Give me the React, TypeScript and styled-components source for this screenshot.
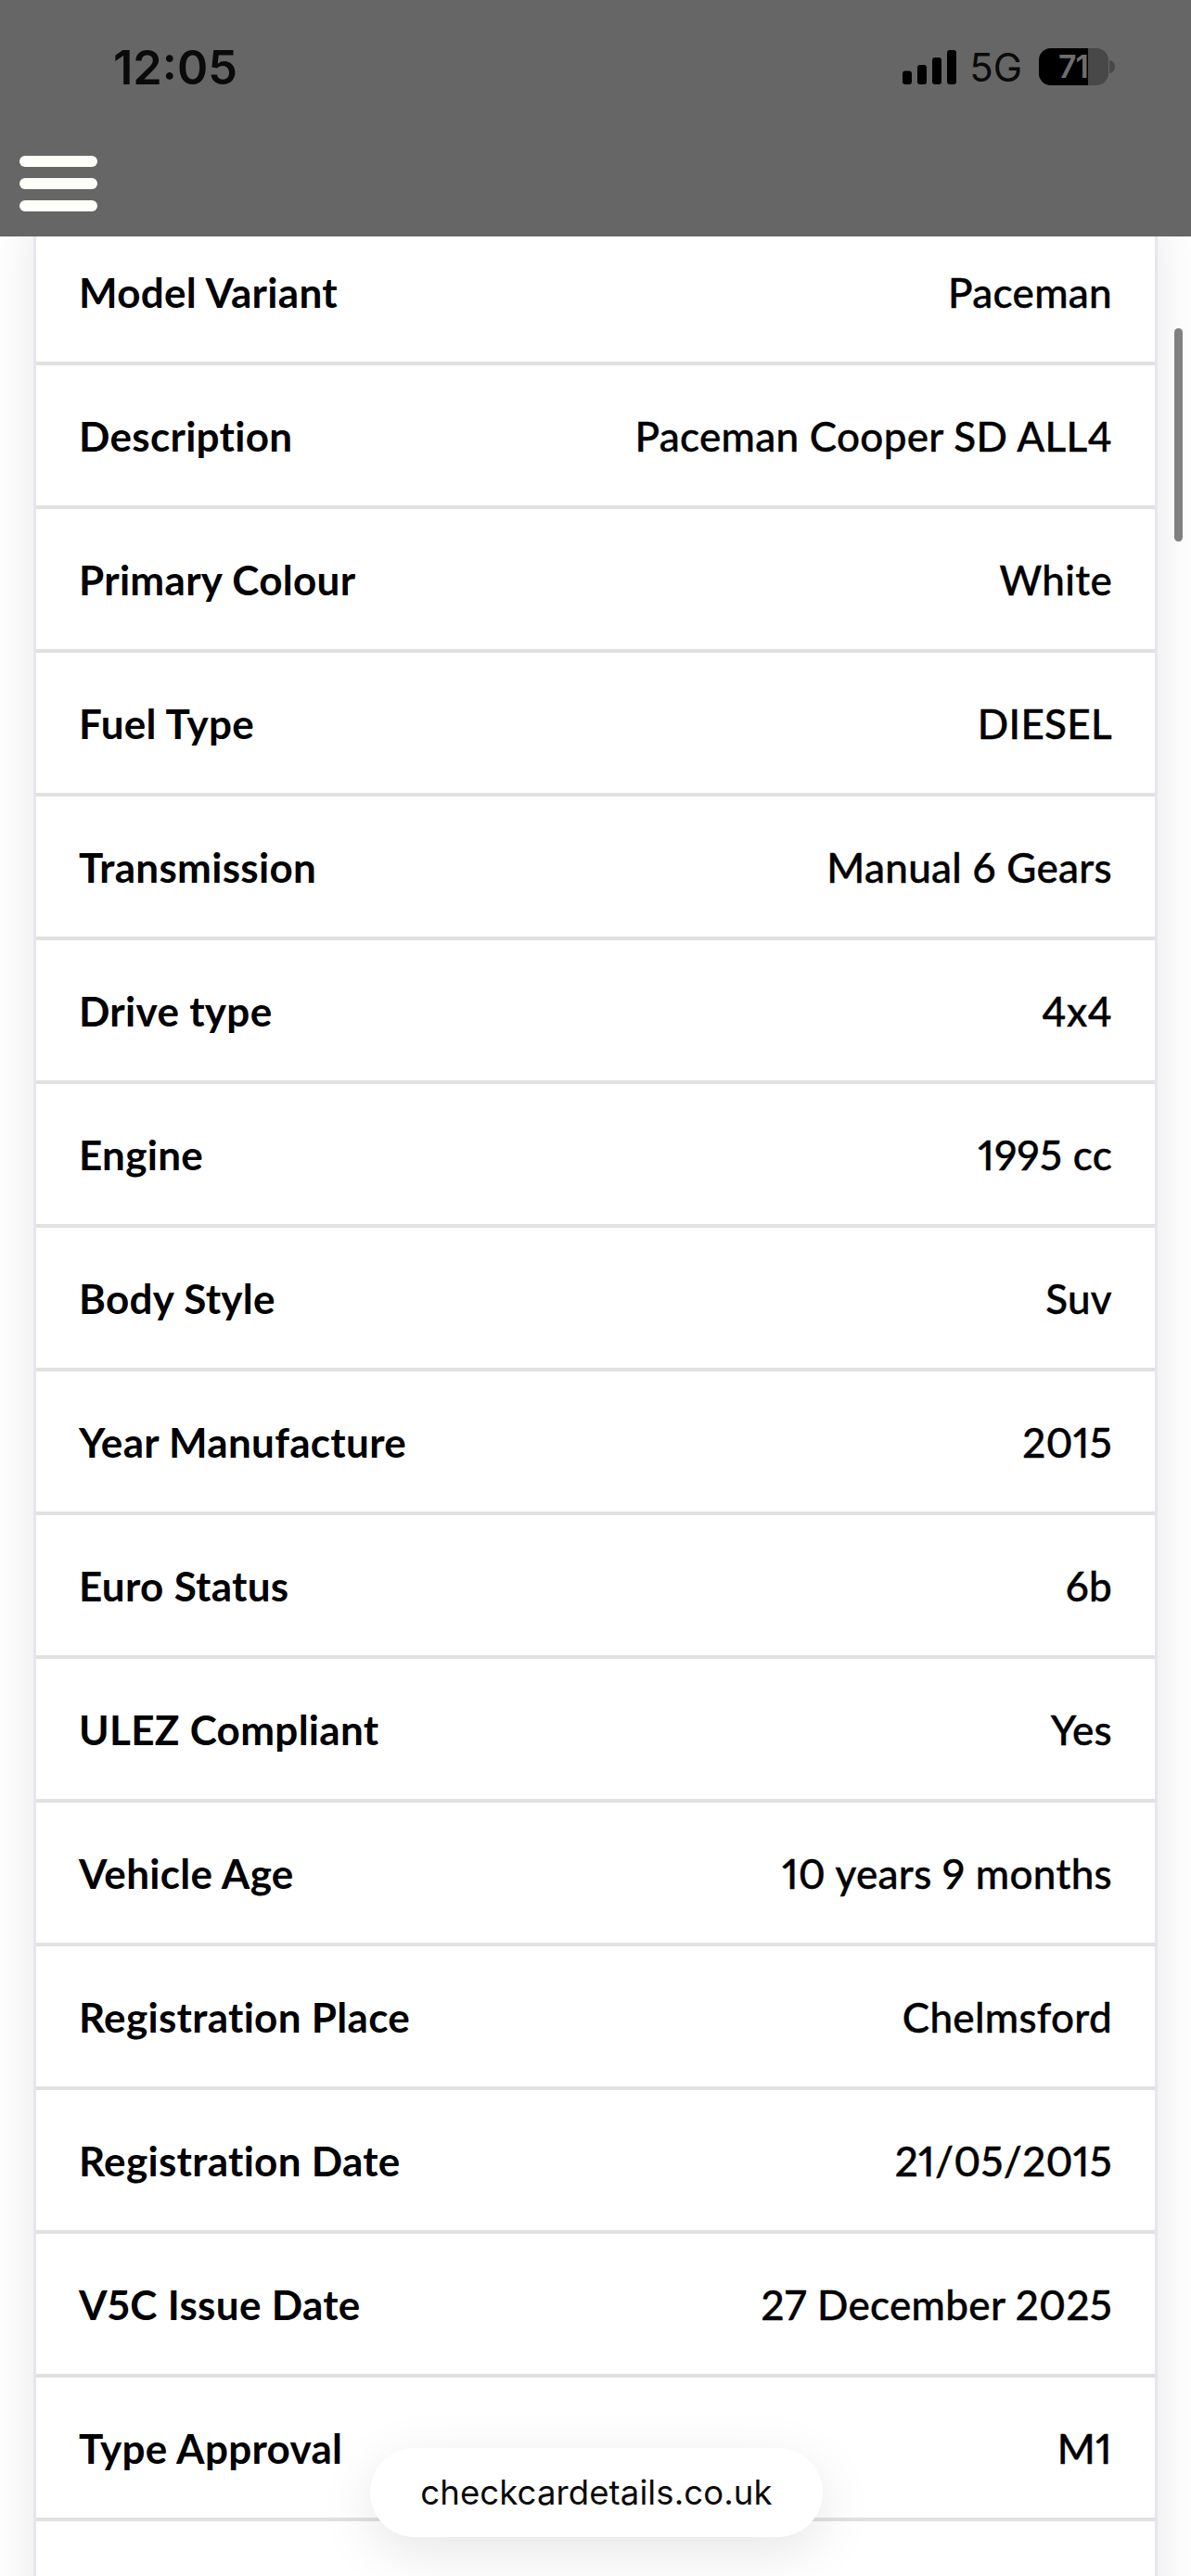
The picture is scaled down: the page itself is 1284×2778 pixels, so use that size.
import React from 'react'
import styled, { createGlobalStyle } from 'styled-components'

const GlobalStyle = createGlobalStyle`
  html, body {
    margin: 0;
    padding: 0;
    height: 100%;
    overflow: hidden;
    background: #fff;
  }
`

const Screen = styled.div`
  position: relative;
  width: 1284px;
  height: 2778px;
  overflow: hidden;
  background: #fff;
  font-family: 'Lato', 'Liberation Sans', sans-serif;
  color: #000;
`

const Header = styled.header`
  position: absolute;
  top: 0;
  left: 0;
  right: 0;
  z-index: 2;
  height: 255px;
  background: #666666;
`

const StatusBar = styled.div`
  display: flex;
  justify-content: space-between;
  align-items: center;
  height: 146px;
  padding: 0 82px 0 122px;
  box-sizing: border-box;
  font-family: 'Inter', 'Liberation Sans', sans-serif;
  color: #0a0a0a;
`

const Clock = styled.span`
  font-size: 50.5px;
  font-weight: 600;
  line-height: 1;
`

const StatusRight = styled.div`
  display: flex;
  align-items: center;
  gap: 16px;
`

const Network = styled.span`
  margin: 0 2px 0 -2px;
  font-size: 42px;
  font-weight: 400;
  line-height: 1;
`

const BatteryGroup = styled.div`
  display: flex;
  align-items: center;
  gap: 1px;
  margin-top: -2px;
`

const Battery = styled.div`
  display: flex;
  width: 75px;
  height: 40px;
  border-radius: 13px;
  overflow: hidden;
  background: #484848;
`

const BatteryFill = styled.div`
  width: 53px;
  height: 100%;
  background: #000;
  color: #6e6e6e;
  font-size: 34px;
  font-weight: 600;
  line-height: 40px;
  text-align: right;
  letter-spacing: -1px;
`

const Hamburger = styled.div`
  display: flex;
  flex-direction: column;
  gap: 12px;
  width: 84px;
  margin-left: 21px;
  margin-top: 22px;
`

const HamburgerBar = styled.span`
  display: block;
  height: 12px;
  border-radius: 6px;
  background: #fffffa;
`

const Content = styled.main`
  padding-top: 239px;
`

const Card = styled.section`
  margin: 0 36px;
  background: #fff;
  border-left: 3px solid #e5e6f0;
  border-right: 3px solid #e5e6f0;
  box-shadow: 0 0 50px rgba(0, 0, 0, 0.1);
`

const Row = styled.div`
  display: flex;
  justify-content: space-between;
  align-items: center;
  box-sizing: border-box;
  height: 155px;
  padding: 0 46px;
  border-bottom: 4px solid #e1e1e1;
  font-size: 44px;
  letter-spacing: 0.3px;
  font-variant-numeric: proportional-nums;
`

const Label = styled.span`
  font-weight: 700;
`

const Value = styled.span`
  font-weight: 500;
  -webkit-text-stroke: 0.4px #000;
`

const ScrollThumb = styled.div`
  position: absolute;
  top: 354px;
  left: 1266px;
  width: 9px;
  height: 230px;
  border-radius: 5px;
  background: #808080;
`

const UrlPill = styled.div`
  position: absolute;
  z-index: 3;
  top: 2640px;
  left: 399px;
  display: flex;
  align-items: center;
  justify-content: center;
  width: 488px;
  height: 96px;
  border-radius: 48px;
  background: #fff;
  box-shadow: 0 16px 60px rgba(0, 0, 0, 0.1);
  font-family: 'Inter', 'Liberation Sans', sans-serif;
  font-size: 36.5px;
  letter-spacing: 0.1px;
  color: #0a0a0a;
`

const rows: [string, string][] = [
  ['Model Variant', 'Paceman'],
  ['Description', 'Paceman Cooper SD ALL4'],
  ['Primary Colour', 'White'],
  ['Fuel Type', 'DIESEL'],
  ['Transmission', 'Manual 6 Gears'],
  ['Drive type', '4x4'],
  ['Engine', '1995 cc'],
  ['Body Style', 'Suv'],
  ['Year Manufacture', '2015'],
  ['Euro Status', '6b'],
  ['ULEZ Compliant', 'Yes'],
  ['Vehicle Age', '10 years 9 months'],
  ['Registration Place', 'Chelmsford'],
  ['Registration Date', '21/05/2015'],
  ['V5C Issue Date', '27 December 2025'],
  ['Type Approval', 'M1'],
  ['', ''],
]

const Signal = () => (
  <svg width="58" height="38" viewBox="0 0 58 38" fill="#000">
    <rect x="0" y="22.5" width="10" height="14.5" rx="3" />
    <rect x="16" y="16" width="10" height="21" rx="3" />
    <rect x="32" y="8" width="10" height="29" rx="3" />
    <rect x="48" y="0" width="10" height="37" rx="3" />
  </svg>
)

const BatteryTip = () => (
  <svg width="6" height="14" viewBox="0 0 6 14" fill="#484848">
    <path d="M0 0c3.500.5 6 3.300 6 7s-2.500 6.500-6 7z" />
  </svg>
)

export default function App() {
  return (
    <Screen>
      <GlobalStyle />
      <Header>
        <StatusBar>
          <Clock>12:05</Clock>
          <StatusRight>
            <Signal />
            <Network>5G</Network>
            <BatteryGroup>
              <Battery>
                <BatteryFill>71</BatteryFill>
              </Battery>
              <BatteryTip />
            </BatteryGroup>
          </StatusRight>
        </StatusBar>
        <Hamburger>
          <HamburgerBar />
          <HamburgerBar />
          <HamburgerBar />
        </Hamburger>
      </Header>
      <Content>
        <Card>
          {rows.map(([label, value], i) => (
            <Row key={i}>
              <Label>{label}</Label>
              <Value>{value}</Value>
            </Row>
          ))}
        </Card>
      </Content>
      <ScrollThumb />
      <UrlPill>checkcardetails.co.uk</UrlPill>
    </Screen>
  )
}
